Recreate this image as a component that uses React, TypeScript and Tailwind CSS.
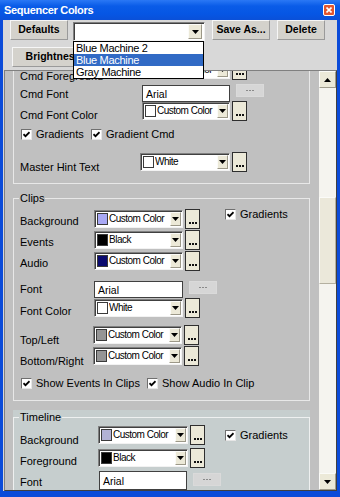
import React from "react";

type Kids = { children?: React.ReactNode; className?: string };

function Tri({ up = false }: { up?: boolean }) {
  return (
    <svg width="7" height="4" viewBox="0 0 7 4">
      <polygon points={up ? "0,4 7,4 3.5,0" : "0,0 7,0 3.5,4"} fill="#000" />
    </svg>
  );
}

function Swatch({ color }: { color: string }) {
  return <span className={`w-[11px] h-[12px] shrink-0 border border-[#3a3a3a] ${color}`} />;
}

function Combo({ w, color, text }: { w: string; color: string; text: string }) {
  return (
    <div
      className={`${w} h-[18px] flex items-center bg-white border border-[#808080] border-r-[#f2f2f2] border-b-[#f2f2f2] shadow-[inset_1px_1px_0_#404040] pl-[2px] pr-[1px]`}
    >
      <Swatch color={color} />
      <span className="ml-[1px] flex-1 min-w-0 overflow-hidden whitespace-nowrap text-[10px] leading-[12px] tracking-[-0.5px]">
        {text}
      </span>
      <span className="w-[11px] h-[14px] shrink-0 flex items-center justify-center bg-[#ece9d8] border border-[#fbfbf8] border-r-[#9c9888] border-b-[#9c9888]">
        <Tri />
      </span>
    </div>
  );
}

function Dots() {
  return (
    <div className="ml-[2px] w-[15px] h-[20px] shrink-0 bg-[#ece9d8] border border-[#2e2e2e] flex items-end justify-center pb-[4px]">
      <svg width="8" height="2" viewBox="0 0 8 2">
        <rect x="0" y="0" width="2" height="2" fill="#111" />
        <rect x="3" y="0" width="2" height="2" fill="#111" />
        <rect x="6" y="0" width="2" height="2" fill="#111" />
      </svg>
    </div>
  );
}

function ComboDots({ w, color, text }: { w: string; color: string; text: string }) {
  return (
    <div className="flex items-center h-[20px] shrink-0">
      <Combo w={w} color={color} text={text} />
      <Dots />
    </div>
  );
}

function GrayBtn({ className = "" }: { className?: string }) {
  return (
    <div className={`ml-[6px] w-[28px] h-[13px] shrink-0 bg-[#d6d6d6] border border-[#dadada] flex items-center justify-center ${className}`}>
      <svg width="8" height="1" viewBox="0 0 8 1">
        <rect x="0" y="0" width="2" height="1" fill="#8a8a8a" />
        <rect x="3" y="0" width="2" height="1" fill="#8a8a8a" />
        <rect x="6" y="0" width="2" height="1" fill="#8a8a8a" />
      </svg>
    </div>
  );
}

function Input({ w, h }: { w: string; h: string }) {
  return (
    <div className={`${w} ${h} shrink-0 bg-white border border-[#404040] pl-[3px] flex items-center text-[10.5px] leading-[12px]`}>
      Arial
    </div>
  );
}

function Check() {
  return (
    <span className="w-[11px] h-[11px] shrink-0 bg-white border border-[#6f6f6f] border-r-[#e6e6e6] border-b-[#e6e6e6] flex items-center justify-center">
      <svg width="7" height="7" viewBox="0 0 7 7">
        <path d="M0.5 3.2 L2.5 5.2 L6.5 1.2" stroke="#000" strokeWidth="1.7" fill="none" />
      </svg>
    </span>
  );
}

function CheckItem({ label, w = "", className = "" }: { label: string; w?: string; className?: string }) {
  return (
    <div className={`flex items-center h-[13px] shrink-0 ${w} ${className}`}>
      <Check />
      <span className="ml-[4px] text-[11px] leading-[13px] whitespace-nowrap">{label}</span>
    </div>
  );
}

function Row({
  label,
  lw,
  lt,
  h,
  className = "",
  children,
}: {
  label: string;
  lw: string;
  lt: string;
  h: string;
  className?: string;
  children?: React.ReactNode;
}) {
  return (
    <div className={`flex items-start ${h} ${className}`}>
      <div className={`${lw} ${lt} shrink-0 text-[11px] leading-[13px] whitespace-nowrap`}>{label}</div>
      {children}
    </div>
  );
}

function TBtn({ w, children, className = "" }: Kids & { w: string }) {
  return (
    <div
      className={`${w} h-[20px] shrink-0 flex items-center justify-center bg-[#d4d2cc] border border-[#f6f6f6] border-r-[#9a9a9a] border-b-[#9a9a9a] text-[10.5px] font-bold ${className}`}
    >
      {children}
    </div>
  );
}

function ScrollBtn({ up = false }: { up?: boolean }) {
  return (
    <div className="h-[17px] shrink-0 flex items-center justify-center bg-[#ece9d8] border border-[#fbfbf8] border-r-[#a09c8c] border-b-[#a09c8c]">
      <Tri up={up} />
    </div>
  );
}

export default function App() {
  return (
    <div className="w-[340px] h-[497px] bg-[#0b4bd9] flex flex-col overflow-hidden font-['Liberation_Sans',Arial,sans-serif] text-black">
      {/* Title bar */}
      <div className="h-[20px] shrink-0 flex items-center justify-between pl-[4px] pr-[5px] bg-[linear-gradient(180deg,#2a78f5_0%,#0a5ce8_30%,#0656e4_70%,#0a50d8_100%)]">
        <span className="text-white font-bold text-[11px] tracking-[-0.3px] leading-none">Sequencer Colors</span>
        <span className="w-[12px] h-[12px] rounded-[2px] bg-[#e2562f] border border-white flex items-center justify-center">
          <svg width="6" height="6" viewBox="0 0 6 6">
            <path d="M0.5 0.5 L5.5 5.5 M5.5 0.5 L0.5 5.5" stroke="#fff" strokeWidth="1.6" />
          </svg>
        </span>
      </div>

      {/* Body */}
      <div className="flex-1 min-h-0 mx-[3px] mb-[6px] flex flex-col bg-[#d8d8d8]">
        {/* Toolbar */}
        <div className="relative h-[50px] shrink-0">
          <div className="flex items-start pl-[7px]">
            <TBtn w="w-[58px]">Defaults</TBtn>
            <div className="ml-[5px] mt-[2px] w-[132px] h-[19px] shrink-0 bg-white border border-[#808080] border-r-[#f2f2f2] border-b-[#f2f2f2] shadow-[inset_1px_1px_0_#404040] flex items-center justify-end pr-[2px]">
              <span className="w-[14px] h-[15px] flex items-center justify-center bg-[#ece9d8] border border-[#fbfbf8] border-r-[#9c9888] border-b-[#9c9888]">
                <Tri />
              </span>
            </div>
            <TBtn w="w-[58px]" className="ml-[7px]">
              Save As...
            </TBtn>
            <TBtn w="w-[48px]" className="ml-[7px]">
              Delete
            </TBtn>
          </div>
          <div className="pl-[9px] mt-[6px] flex">
            <TBtn w="w-[82px]">Brightness</TBtn>
          </div>
          {/* Open dropdown list */}
          <div className="absolute left-[70px] top-[21px] w-[131px] border border-black bg-white text-[11px] leading-[12px] tracking-[-0.3px]">
            <div className="h-[12px] pl-[2px] whitespace-nowrap">Blue Machine 2</div>
            <div className="h-[12px] pl-[2px] whitespace-nowrap bg-[#316ac5] text-white">Blue Machine</div>
            <div className="h-[12px] pl-[2px] whitespace-nowrap">Gray Machine</div>
          </div>
        </div>

        {/* Scroll area */}
        <div className="flex-1 min-h-0 ml-[1px] flex border-t border-l border-r border-b border-[#808080] border-r-[#404040] border-b-[#404040]">
          <div className="flex-1 min-w-0 overflow-hidden bg-[#c0c0c0]">
            <div className="-mt-[31px] ml-[8px] w-[297px] flex flex-col">
              {/* Section 1 (scrolled, top hidden) */}
              <div className="border border-[#e8e8e8] pt-[19px] pl-[6px] pb-[11px] flex flex-col">
                <Row label="Cmd Foreground" lw="w-[122px]" lt="pt-[10px]" h="h-[20px]">
                  <ComboDots w="w-[88px]" color="bg-[#9a9a9a]" text="Custom Color" />
                </Row>
                <Row label="Cmd Font" lw="w-[122px]" lt="pt-[3px]" h="h-[17px]" className="mt-[5px]">
                  <Input w="w-[88px]" h="h-[17px]" />
                  <GrayBtn className="-mt-[1px]" />
                </Row>
                <Row label="Cmd Font Color" lw="w-[122px]" lt="pt-[8px]" h="h-[20px]" className="-mt-[1px]">
                  <ComboDots w="w-[88px]" color="bg-white" text="Custom Color" />
                </Row>
                <div className="flex items-center h-[13px] mt-[7px] pl-[1px]">
                  <CheckItem label="Gradients" w="w-[70px]" />
                  <CheckItem label="Gradient Cmd" />
                </div>
                <Row label="Master Hint Text" lw="w-[120px]" lt="pt-[9px]" h="h-[20px]" className="mt-[11px]">
                  <ComboDots w="w-[90px]" color="bg-white" text="White" />
                </Row>
              </div>

              {/* Section 2: Clips */}
              <fieldset className="mt-[8px] min-w-0 border border-[#e8e8e8] pl-[6px] pt-[4px] pb-[10px]">
                <legend className="-ml-[1px] px-[1px] text-[11px] leading-[12px]">Clips</legend>
                <Row label="Background" lw="w-[74px]" lt="pt-[7px]" h="h-[22px]">
                  <div className="mt-[1px]">
                    <ComboDots w="w-[89px]" color="bg-[#a9a9f5]" text="Custom Color" />
                  </div>
                  <CheckItem label="Gradients" className="ml-[25px]" />
                </Row>
                <Row label="Events" lw="w-[74px]" lt="pt-[6px]" h="h-[20px]">
                  <ComboDots w="w-[89px]" color="bg-black" text="Black" />
                </Row>
                <Row label="Audio" lw="w-[74px]" lt="pt-[6px]" h="h-[20px]" className="mt-[1px]">
                  <ComboDots w="w-[89px]" color="bg-[#0a0a6e]" text="Custom Color" />
                </Row>
                <Row label="Font" lw="w-[74px]" lt="pt-[2px]" h="h-[17px]" className="mt-[10px]">
                  <Input w="w-[89px]" h="h-[17px]" />
                  <GrayBtn />
                </Row>
                <Row label="Font Color" lw="w-[74px]" lt="pt-[7px]" h="h-[20px]">
                  <ComboDots w="w-[89px]" color="bg-white" text="White" />
                </Row>
                <Row label="Top/Left" lw="w-[73px]" lt="pt-[9px]" h="h-[20px]" className="mt-[7px]">
                  <ComboDots w="w-[89px]" color="bg-[#959595]" text="Custom Color" />
                </Row>
                <Row label="Bottom/Right" lw="w-[73px]" lt="pt-[9px]" h="h-[20px]" className="mt-[1px]">
                  <ComboDots w="w-[89px]" color="bg-[#959595]" text="Custom Color" />
                </Row>
                <div className="flex items-center h-[13px] mt-[11px] pl-[1px]">
                  <CheckItem label="Show Events In Clips" w="w-[126px]" />
                  <CheckItem label="Show Audio In Clip" />
                </div>
              </fieldset>

              {/* Section 3: Timeline */}
              <div className="mt-[9px] pt-[1px] bg-[#c6cece]">
                <fieldset className="min-w-0 border border-[#eef0f0] pl-[6px] pt-[2px] pb-[10px]">
                  <legend className="-ml-[1px] px-[1px] text-[11px] leading-[12px]">Timeline</legend>
                  <Row label="Background" lw="w-[78px]" lt="pt-[9px]" h="h-[23px]">
                    <ComboDots w="w-[90px]" color="bg-[#b2b2d6]" text="Custom Color" />
                    <CheckItem label="Gradients" className="ml-[20px] mt-[4px]" />
                  </Row>
                  <Row label="Foreground" lw="w-[78px]" lt="pt-[7px]" h="h-[20px]">
                    <ComboDots w="w-[90px]" color="bg-black" text="Black" />
                  </Row>
                  <Row label="Font" lw="w-[79px]" lt="pt-[5px]" h="h-[19px]" className="mt-[3px]">
                    <Input w="w-[88px]" h="h-[19px]" />
                    <GrayBtn className="mt-[2px]" />
                  </Row>
                </fieldset>
              </div>
            </div>
          </div>

          {/* Scrollbar */}
          <div className="w-[17px] shrink-0 flex flex-col bg-[#f5f4ef]">
            <ScrollBtn up />
            <div className="flex-1 min-h-0 flex flex-col">
              <div className="mt-[109px] h-[87px] bg-[#ebe8da] border border-[#fbfbf8] border-r-[#b4b0a0] border-b-[#b4b0a0]" />
            </div>
            <ScrollBtn />
          </div>
        </div>
      </div>
    </div>
  );
}
